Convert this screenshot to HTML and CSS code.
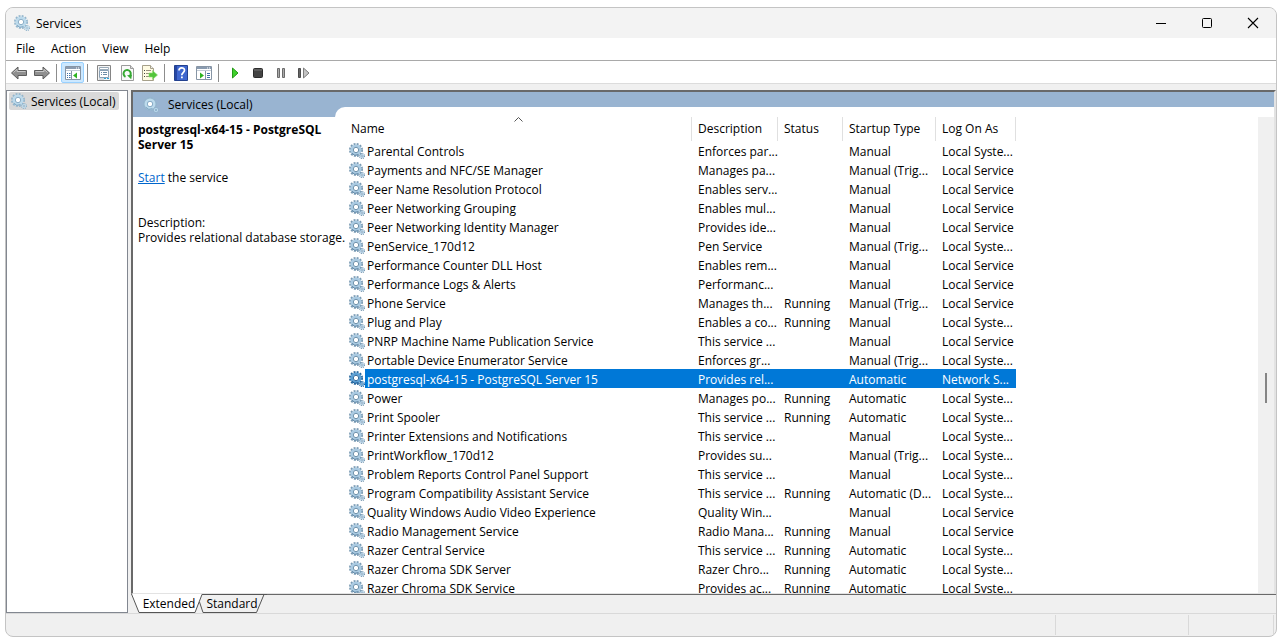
FILE: index.html
```html
<!DOCTYPE html>
<html lang="en">
<head>
  <meta charset="UTF-8">
  <meta name="viewport" content="width=device-width, initial-scale=1.0">
  <title>Services</title>
  <link rel="stylesheet" href="styles.css">
</head>
<body>

  <!-- Shared icons -->
  <svg class="sprite" aria-hidden="true">
    <symbol id="gear" viewBox="0 0 16 16">
      <circle class="gear-teeth" cx="7" cy="7" r="6" fill="none" stroke-width="2" stroke-dasharray="1.9 1.24"/>
      <circle class="gear-ring" cx="7" cy="7" r="4.2" fill="none" stroke-width="2.6"/>
      <circle class="gear-edge" cx="7" cy="7" r="2.7" fill="#fff" stroke-width="0.9"/>
      <path class="gear-edge" d="M2.8 10.2A5.3 5.3 0 0 0 9.5 11.6" fill="none" stroke-width="1"/>
      <circle class="gear-teeth" cx="13" cy="13" r="2.5" fill="none" stroke-width="1.2" stroke-dasharray="1.1 0.86"/>
      <circle class="gear-ring" cx="13" cy="13" r="1.5" fill="none" stroke-width="1.2"/>
      <circle class="gear-dot" cx="13" cy="13" r="0.8"/>
    </symbol>
  </svg>

  <div class="window">

    <!-- Title bar -->
    <header class="title-bar">
      <svg class="gear pale"><use href="#gear"/></svg>
      <h1>Services</h1>
      <div class="window-buttons">
        <button aria-label="Minimize"><svg width="12" height="12" viewBox="0 0 12 12"><path d="M1 6.5h10" stroke="#000"/></svg></button>
        <button aria-label="Maximize"><svg width="12" height="12" viewBox="0 0 12 12"><rect x="1.5" y="1.5" width="9" height="9" rx="1" fill="none" stroke="#000"/></svg></button>
        <button aria-label="Close"><svg width="12" height="12" viewBox="0 0 12 12"><path d="M1 1l10 10M11 1L1 11" stroke="#000" stroke-width="1.1"/></svg></button>
      </div>
    </header>

    <!-- Menu -->
    <nav class="menu-bar">
      <button>File</button>
      <button>Action</button>
      <button>View</button>
      <button>Help</button>
    </nav>

    <!-- Toolbar -->
    <div class="toolbar">
      <button aria-label="Back">
        <svg width="18" height="16" viewBox="0 0 18 16"><path d="M1.5 8L8 2v3.500h8.500v5H8V14z" fill="#8f8f8f" stroke="#5c5c5c"/><path d="M3.500 7.500L7 4.300v2.200h8.500" fill="none" stroke="#c6c6c6"/></svg>
      </button>
      <button aria-label="Forward">
        <svg width="18" height="16" viewBox="0 0 18 16"><path d="M16.500 8L10 2v3.500H1.500v5H10V14z" fill="#8f8f8f" stroke="#5c5c5c"/><path d="M2.500 6.500H11V4.300L14.500 7.500" fill="none" stroke="#c6c6c6"/></svg>
      </button>
      <span class="separator"></span>
      <button class="pressed" aria-label="Show/Hide Console Tree">
        <svg width="16" height="16" viewBox="0 0 16 16"><path d="M.5 1.500h15v13H.5z" fill="#fff" stroke="#8795a5"/><path d="M1 2h14v2H1z" fill="#8a9bb0"/><path d="M11 3h1M13 3h1" stroke="#fff"/><path d="M1 5.500h14" stroke="#c3ccd6"/><path d="M6.500 6v8" stroke="#8795a5"/><path d="M2 8.500h1M2 10.500h1M2 12.500h1M4 8.500h1.500M4 10.500h1.500M4 12.500h1.500" stroke="#3f70a8"/><path d="M12 7.500v6l-4-3z" fill="#2fb41f"/></svg>
      </button>
      <span class="separator"></span>
      <button aria-label="Properties">
        <svg width="16" height="16" viewBox="0 0 16 16"><path d="M1.500.5h13v15h-13z" fill="#f4f4f4" stroke="#858585"/><path d="M3.500 2.500h9v2h-9z" fill="#fff" stroke="#9aabb9"/><path d="M3.500 5.500h9v7h-9z" fill="#fff" stroke="#8aa0b4"/><path d="M5 7.500h1M7 7.500h4M5 9.500h1M7 9.500h4" stroke="#6c8ba6"/><path d="M3 14h5" stroke="#b8c4ce"/><path d="M8 13.500h2M11 13.500h2" stroke="#29a4d9"/></svg>
      </button>
      <button aria-label="Refresh">
        <svg width="16" height="16" viewBox="0 0 16 16"><path d="M2.500.5h9l3 3v12h-12z" fill="#fafafa" stroke="#9b9b9b"/><path d="M11.500.5v3h3" fill="#ddd" stroke="#9b9b9b"/><path d="M6.500 11.800A3.600 3.600 0 1 1 11.200 10.500" fill="none" stroke="#35a832" stroke-width="2"/><path d="M8 10.200l5-.4-.8 4.500z" fill="#35a832"/></svg>
      </button>
      <button aria-label="Export List">
        <svg width="16" height="16" viewBox="0 0 16 16"><path d="M.5.5h8l3 3v12H.5z" fill="#fffbe3" stroke="#a6a08a"/><path d="M8.500.5v3h3" fill="#eee" stroke="#a6a08a"/><path d="M2 5.500h1M2 8.500h1M2 11.500h1" stroke="#444"/><path d="M4 5.500h5M4 8.500h5M4 11.500h5" stroke="#99917c"/><path d="M7 8h3.500V5.500l5 4.500-5 4.500V12H7z" fill="#53c53a" stroke="#8fdc77" stroke-width=".6"/></svg>
      </button>
      <span class="separator"></span>
      <button aria-label="Help">
        <svg width="16" height="16" viewBox="0 0 16 16"><path d="M1.500.5h13v15h-13z" fill="#3f67cf" stroke="#23418f"/><path d="M2 1h2v14H2z" fill="#2747a3"/><path d="M6 5.500C6 2 11.500 2 11.500 5.300 11.500 7.600 8.800 7.600 8.800 10.200" fill="none" stroke="#fff" stroke-width="1.700"/><path d="M8 11.500h1.800v1.800H8z" fill="#fff"/></svg>
      </button>
      <button aria-label="Show/Hide Action Pane">
        <svg width="16" height="16" viewBox="0 0 16 16"><path d="M.5 1.500h15v13H.5z" fill="#fff" stroke="#8795a5"/><path d="M1 2h14v2H1z" fill="#8a9bb0"/><path d="M11 3h1M13 3h1" stroke="#fff"/><path d="M1 5.500h14" stroke="#c3ccd6"/><path d="M9.500 6v8" stroke="#8795a5"/><path d="M11 8.500h3M11 10.500h3M11 12.500h3" stroke="#3f70a8"/><path d="M4 7.500v6l4-3z" fill="#2fb41f"/></svg>
      </button>
      <span class="separator"></span>
      <button aria-label="Start Service">
        <svg width="16" height="16" viewBox="0 0 16 16"><path d="M5.500 3v10l5.500-5z" fill="#3fd12c" stroke="#259a18"/></svg>
      </button>
      <button aria-label="Stop Service">
        <svg width="16" height="16" viewBox="0 0 16 16"><rect x="3.500" y="3.500" width="9" height="9" rx="1" fill="#444" stroke="#2c2c2c"/><path d="M4 5h8" stroke="#777"/></svg>
      </button>
      <button aria-label="Pause Service">
        <svg width="16" height="16" viewBox="0 0 16 16"><path d="M4.500 3.500h2v9h-2zM9.500 3.500h2v9h-2z" fill="#aaa" stroke="#6b6b6b"/></svg>
      </button>
      <button aria-label="Restart Service">
        <svg width="16" height="16" viewBox="0 0 16 16"><path d="M2.500 3.500h2v9h-2z" fill="#666" stroke="#4c4c4c"/><path d="M7.500 3v10l5.500-5z" fill="#c4c4c4" stroke="#7d7d7d"/></svg>
      </button>
    </div>

    <!-- Console -->
    <main class="console">
      <aside class="tree">
        <a class="tree-item" href="#services"><svg class="gear pale"><use href="#gear"/></svg><span>Services (Local)</span></a>
      </aside>

      <section class="view" id="services">
        <div class="panes">
          <div class="detail">
            <div class="detail-header"><svg class="gear pale"><use href="#gear"/></svg><span>Services (Local)</span></div>
            <div class="detail-body">
              <h2>postgresql-x64-15 - PostgreSQL Server 15</h2>
              <p><a href="#start">Start</a> the service</p>
              <p class="description">Description:<br>Provides relational database storage.</p>
            </div>
          </div>

          <div class="list">
            <div class="list-scroll">
              <table>
                <colgroup><col class="col-name"><col class="col-description"><col class="col-status"><col class="col-startup"><col class="col-logon"></colgroup>
                <thead>
                  <tr>
                    <th>Name<svg class="sort" width="9" height="5" viewBox="0 0 9 5"><path d="M.5 4.500l4-4 4 4" fill="none" stroke="#555"/></svg></th>
                    <th>Description</th><th>Status</th><th>Startup Type</th><th>Log On As</th>
                  </tr>
                </thead>
                <tbody>
                  <tr><td><svg class="gear"><use href="#gear"/></svg><span>Parental Controls</span></td><td>Enforces par...</td><td></td><td>Manual</td><td>Local Syste...</td></tr>
                  <tr><td><svg class="gear"><use href="#gear"/></svg><span>Payments and NFC/SE Manager</span></td><td>Manages pa...</td><td></td><td>Manual (Trig...</td><td>Local Service</td></tr>
                  <tr><td><svg class="gear"><use href="#gear"/></svg><span>Peer Name Resolution Protocol</span></td><td>Enables serv...</td><td></td><td>Manual</td><td>Local Service</td></tr>
                  <tr><td><svg class="gear"><use href="#gear"/></svg><span>Peer Networking Grouping</span></td><td>Enables mul...</td><td></td><td>Manual</td><td>Local Service</td></tr>
                  <tr><td><svg class="gear"><use href="#gear"/></svg><span>Peer Networking Identity Manager</span></td><td>Provides ide...</td><td></td><td>Manual</td><td>Local Service</td></tr>
                  <tr><td><svg class="gear"><use href="#gear"/></svg><span>PenService_170d12</span></td><td>Pen Service</td><td></td><td>Manual (Trig...</td><td>Local Syste...</td></tr>
                  <tr><td><svg class="gear"><use href="#gear"/></svg><span>Performance Counter DLL Host</span></td><td>Enables rem...</td><td></td><td>Manual</td><td>Local Service</td></tr>
                  <tr><td><svg class="gear"><use href="#gear"/></svg><span>Performance Logs &amp; Alerts</span></td><td>Performanc...</td><td></td><td>Manual</td><td>Local Service</td></tr>
                  <tr><td><svg class="gear"><use href="#gear"/></svg><span>Phone Service</span></td><td>Manages th...</td><td>Running</td><td>Manual (Trig...</td><td>Local Service</td></tr>
                  <tr><td><svg class="gear"><use href="#gear"/></svg><span>Plug and Play</span></td><td>Enables a co...</td><td>Running</td><td>Manual</td><td>Local Syste...</td></tr>
                  <tr><td><svg class="gear"><use href="#gear"/></svg><span>PNRP Machine Name Publication Service</span></td><td>This service ...</td><td></td><td>Manual</td><td>Local Service</td></tr>
                  <tr><td><svg class="gear"><use href="#gear"/></svg><span>Portable Device Enumerator Service</span></td><td>Enforces gr...</td><td></td><td>Manual (Trig...</td><td>Local Syste...</td></tr>
                  <tr class="selected"><td><svg class="gear"><use href="#gear"/></svg><span>postgresql-x64-15 - PostgreSQL Server 15</span></td><td>Provides rel...</td><td></td><td>Automatic</td><td>Network S...</td></tr>
                  <tr><td><svg class="gear"><use href="#gear"/></svg><span>Power</span></td><td>Manages po...</td><td>Running</td><td>Automatic</td><td>Local Syste...</td></tr>
                  <tr><td><svg class="gear"><use href="#gear"/></svg><span>Print Spooler</span></td><td>This service ...</td><td>Running</td><td>Automatic</td><td>Local Syste...</td></tr>
                  <tr><td><svg class="gear"><use href="#gear"/></svg><span>Printer Extensions and Notifications</span></td><td>This service ...</td><td></td><td>Manual</td><td>Local Syste...</td></tr>
                  <tr><td><svg class="gear"><use href="#gear"/></svg><span>PrintWorkflow_170d12</span></td><td>Provides su...</td><td></td><td>Manual (Trig...</td><td>Local Syste...</td></tr>
                  <tr><td><svg class="gear"><use href="#gear"/></svg><span>Problem Reports Control Panel Support</span></td><td>This service ...</td><td></td><td>Manual</td><td>Local Syste...</td></tr>
                  <tr><td><svg class="gear"><use href="#gear"/></svg><span>Program Compatibility Assistant Service</span></td><td>This service ...</td><td>Running</td><td>Automatic (D...</td><td>Local Syste...</td></tr>
                  <tr><td><svg class="gear"><use href="#gear"/></svg><span>Quality Windows Audio Video Experience</span></td><td>Quality Win...</td><td></td><td>Manual</td><td>Local Service</td></tr>
                  <tr><td><svg class="gear"><use href="#gear"/></svg><span>Radio Management Service</span></td><td>Radio Mana...</td><td>Running</td><td>Manual</td><td>Local Service</td></tr>
                  <tr><td><svg class="gear"><use href="#gear"/></svg><span>Razer Central Service</span></td><td>This service ...</td><td>Running</td><td>Automatic</td><td>Local Syste...</td></tr>
                  <tr><td><svg class="gear"><use href="#gear"/></svg><span>Razer Chroma SDK Server</span></td><td>Razer Chro...</td><td>Running</td><td>Automatic</td><td>Local Syste...</td></tr>
                  <tr><td><svg class="gear"><use href="#gear"/></svg><span>Razer Chroma SDK Service</span></td><td>Provides ac...</td><td>Running</td><td>Automatic</td><td>Local Syste...</td></tr>
                </tbody>
              </table>
            </div>
            <div class="scrollbar"><div class="thumb"></div></div>
          </div>
        </div>

        <div class="tabs">
          <svg class="tab-shape" width="136" height="19" viewBox="0 0 136 19"><path d="M0 0h71l-7 18.500H8z" fill="#fff"/><path d="M.5 0L8 18.500h56L71 .5H136" fill="none" stroke="#555"/><path d="M68.500 8L72 18.500h53.500L133 .5" fill="none" stroke="#555"/></svg>
          <button>Extended</button>
          <button>Standard</button>
        </div>
      </section>
    </main>

    <!-- Status bar -->
    <footer class="status-bar">
      <span class="status-main"></span>
      <span class="status-mid"></span>
      <span class="status-end"></span>
    </footer>
  </div>

</body>
</html>
```
FILE: styles.css
```css
* {
  margin: 0;
  padding: 0;
  box-sizing: border-box;
}
body {
  height: 100vh;
  padding: 7px 2px 4px 5px;
  overflow: hidden;
  background-color: #fff;
  color: #000;
  font-family: "Open Sans", "Noto Sans", sans-serif;
  font-size: 12px;
  line-height: 15px;
}
button {
  border: none;
  background: none;
  color: inherit;
  font: inherit;
}
svg {
  display: block;
  flex: none;
}
.sprite {
  position: absolute;
  width: 0;
  height: 0;
}

.window {
  display: flex;
  flex-direction: column;
  height: 100%;
  overflow: hidden;
  border: 1px solid #c4c4c4;
  border-radius: 8px;
  background-color: #f0f0f0;
}

/* Gear icon */
.gear {
  --teeth: #7899b2;
  --ring: #a9cae2;
  --edge: #5e84a2;
  width: 16px;
  height: 16px;
}
.pale {
  --teeth: #93b5cc;
  --ring: #bcdaec;
  --edge: #7fa6c2;
}
.selected .gear {
  --teeth: #24659c;
  --ring: #5a9fd4;
  --edge: #1d5a92;
}
.gear-teeth {
  stroke: var(--teeth);
}
.gear-ring {
  stroke: var(--ring);
}
.gear-edge {
  stroke: var(--edge);
}
.gear-dot {
  fill: var(--edge);
}

/* Title bar */
.title-bar {
  display: flex;
  align-items: center;
  height: 30px;
  padding-left: 8px;
  gap: 6px;
  background-color: #f3f3f3;
}
.title-bar h1 {
  flex: 1;
  font-size: 12px;
  font-weight: normal;
}
.window-buttons {
  display: flex;
}
.window-buttons button {
  display: flex;
  align-items: center;
  justify-content: center;
  width: 46px;
  height: 28px;
}

/* Menu */
.menu-bar {
  display: flex;
  align-items: center;
  height: 23px;
  padding: 0 2px 2px;
  border-bottom: 1px solid #a9a9a9;
  background-color: #fff;
}
.menu-bar button {
  padding: 0 8px;
}

/* Toolbar */
.toolbar {
  display: flex;
  align-items: center;
  height: 23px;
  padding: 1px 1px 0;
  border-bottom: 1px solid #dcdcdc;
  background-color: #fff;
}
.toolbar button {
  display: flex;
  align-items: center;
  justify-content: center;
  width: 23px;
  height: 21px;
}
.toolbar .pressed {
  border: 1px solid #99d1ff;
  border-radius: 2px;
  background-color: #cce8ff;
}
.separator {
  width: 1px;
  height: 18px;
  margin: 0 4px 0 3px;
  background-color: #8d8d8d;
}

/* Console */
.console {
  display: flex;
  flex: 1;
  gap: 3px;
  min-height: 0;
  padding-top: 6px;
}
.tree {
  width: 122px;
  border: 1px solid #828790;
  background-color: #fff;
}
.tree-item {
  display: flex;
  align-items: center;
  gap: 4px;
  width: 110px;
  height: 18px;
  margin: 1px 2px;
  padding: 0 2px;
  border-radius: 2px;
  background-color: #d9d9d9;
  color: inherit;
  text-decoration: none;
  white-space: nowrap;
}
.view {
  display: flex;
  flex: 1;
  flex-direction: column;
  min-width: 0;
}
.panes {
  display: flex;
  flex: 1;
  min-height: 0;
  border: 2px solid #696969;
  border-right-color: #e3e3e3;
  border-bottom: 1px solid #e3e3e3;
  background-color: #99b4d1;
}

/* Selected service */
.detail {
  display: flex;
  flex-direction: column;
  width: 202px;
}
.detail-header {
  display: flex;
  align-items: center;
  gap: 9px;
  height: 25px;
  padding-left: 10px;
}
.detail-body {
  flex: 1;
  padding: 5px 0 0 5px;
  background-color: #fff;
}
.detail-body h2 {
  margin-bottom: 18px;
  font-size: 12px;
}
.detail-body p {
  position: relative;
  z-index: 1;
  white-space: nowrap;
}
.detail-body a {
  color: #0066cc;
}
.detail-body .description {
  margin-top: 30px;
}

/* Service list */
.list {
  display: flex;
  flex: 1;
  min-width: 0;
  margin-top: 15px;
  padding-top: 10px;
  border-top-left-radius: 10px;
  background-color: #fff;
}
.list-scroll {
  flex: 1;
  overflow: hidden;
  padding-left: 10px;
}
table {
  width: 671px;
  border-spacing: 0;
  table-layout: fixed;
}
.col-name {
  width: 347px;
}
.col-description {
  width: 86px;
}
.col-status {
  width: 65px;
}
.col-startup {
  width: 93px;
}
.col-logon {
  width: 80px;
}
th {
  position: relative;
  height: 24px;
  padding: 0 6px 2px;
  border-right: 1px solid #e0e0e0;
  font-weight: normal;
  text-align: left;
  white-space: nowrap;
}
.sort {
  position: absolute;
  top: 0;
  left: 50%;
  margin-left: -4px;
}
td {
  height: 19px;
  padding: 2px 0 0 6px;
  white-space: nowrap;
}
td:first-child {
  display: flex;
  align-items: center;
  padding: 0 0 0 4px;
}
td:first-child span {
  flex: 1;
  padding: 2px 0 0 2px;
  line-height: 17px;
}
.selected td + td,
.selected span {
  background-color: #0078d7;
  color: #fff;
}
.scrollbar {
  width: 16px;
  padding: 256px 7px 0;
  background-color: #f0f0f0;
}
.thumb {
  width: 2px;
  height: 30px;
  background-color: #858585;
}

/* View tabs */
.tabs {
  position: relative;
  display: flex;
  height: 19px;
  padding: 0 10px 2px;
  border-top: 1px solid #696969;
}
.tabs button {
  position: relative;
  width: 56px;
  margin-right: 7px;
  white-space: nowrap;
}
.tab-shape {
  position: absolute;
  top: -1px;
  left: 0;
}

/* Status bar */
.status-bar {
  display: flex;
  height: 23px;
  padding: 1px 2px 1px 0;
  border-top: 1px solid #d9d9d9;
}
.status-bar span {
  border-right: 1px solid #d9d9d9;
}
.status-main {
  flex: 1;
}
.status-mid {
  width: 133px;
}
.status-end {
  width: 85px;
}
```
